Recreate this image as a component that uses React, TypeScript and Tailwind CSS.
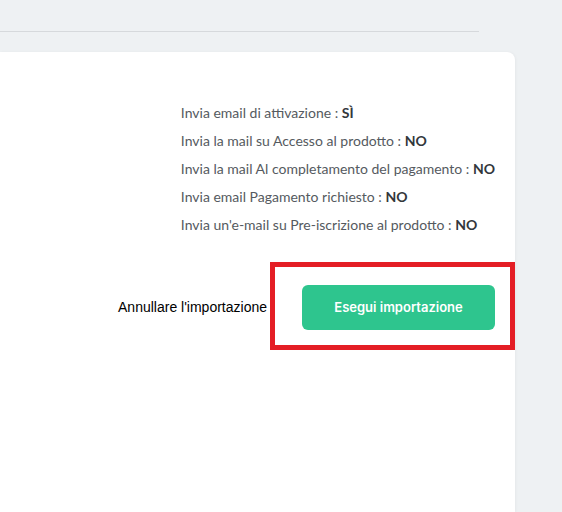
import React from "react";

const emailSettings = [
  { label: "Invia email di attivazione", value: "SÌ" },
  { label: "Invia la mail su Accesso al prodotto", value: "NO" },
  { label: "Invia la mail Al completamento del pagamento", value: "NO" },
  { label: "Invia email Pagamento richiesto", value: "NO" },
  { label: "Invia un'e-mail su Pre-iscrizione al prodotto", value: "NO" },
];

export default function App() {
  return (
    <div className="h-[512px] w-[562px] overflow-hidden bg-[#eef1f3]">
      <div className="h-[32px] w-[479px] border-b border-[#d6d9dc]" />
      <div className="mt-[20px] h-[460px] w-[515px] rounded-tr-[8px] bg-white pr-[20px] pt-[51px] shadow-[1px_0_3px_rgba(0,0,0,0.04)]">
        <div className="flex justify-end">
          <div className="flex flex-col gap-[8px] font-['Lato','Noto_Sans',sans-serif] text-[14px] leading-[20px] text-[#555a60]">
            {emailSettings.map((s) => (
              <div key={s.label}>
                {s.label} : <span className="font-bold text-[#33373b]">{s.value}</span>
              </div>
            ))}
          </div>
        </div>
        <div className="mt-[50px] flex items-center justify-end gap-[35px]">
          <button className="font-['Liberation_Sans',Arial,sans-serif] text-[14px] text-black">
            Annullare l'importazione
          </button>
          <div className="relative">
            <button className="h-[45px] w-[193px] rounded-[6px] bg-[#2ec58e] font-['Inter',sans-serif] text-[13px] font-semibold text-white">
              Esegui importazione
            </button>
            <div className="pointer-events-none absolute left-[-32px] top-[-23px] h-[88px] w-[245px] border-[5px] border-[#e41e25]" />
          </div>
        </div>
      </div>
    </div>
  );
}
